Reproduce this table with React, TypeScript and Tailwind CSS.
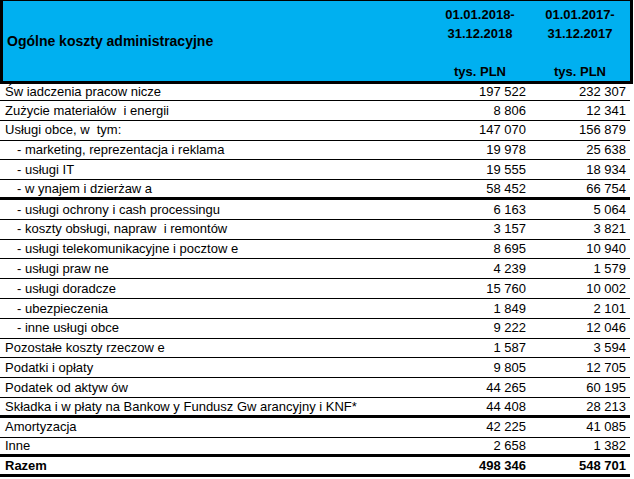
import React from 'react';

type Row = {
  label: string;
  a: string;
  b: string;
  sub?: boolean;
  thick?: boolean;
  bold?: boolean;
};

const rows: Row[] = [
  { label: 'Św iadczenia pracow nicze', a: '197 522', b: '232 307' },
  { label: 'Zużycie materiałów  i energii', a: '8 806', b: '12 341' },
  { label: 'Usługi obce, w  tym:', a: '147 070', b: '156 879' },
  { label: '- marketing, reprezentacja i reklama', a: '19 978', b: '25 638', sub: true },
  { label: '- usługi IT', a: '19 555', b: '18 934', sub: true },
  { label: '- w ynajem i dzierżaw a', a: '58 452', b: '66 754', sub: true, thick: true },
  { label: '- usługi ochrony i cash processingu', a: '6 163', b: '5 064', sub: true },
  { label: '- koszty obsługi, napraw  i remontów', a: '3 157', b: '3 821', sub: true },
  { label: '- usługi telekomunikacyjne i pocztow e', a: '8 695', b: '10 940', sub: true },
  { label: '- usługi praw ne', a: '4 239', b: '1 579', sub: true },
  { label: '- usługi doradcze', a: '15 760', b: '10 002', sub: true },
  { label: '- ubezpieczenia', a: '1 849', b: '2 101', sub: true },
  { label: '- inne usługi obce', a: '9 222', b: '12 046', sub: true },
  { label: 'Pozostałe koszty rzeczow e', a: '1 587', b: '3 594' },
  { label: 'Podatki i opłaty', a: '9 805', b: '12 705' },
  { label: 'Podatek od aktyw ów', a: '44 265', b: '60 195' },
  { label: 'Składka i w płaty na Bankow y Fundusz Gw arancyjny i KNF*', a: '44 408', b: '28 213', thick: true },
  { label: 'Amortyzacja', a: '42 225', b: '41 085' },
  { label: 'Inne', a: '2 658', b: '1 382', thick: true },
  { label: 'Razem', a: '498 346', b: '548 701', thick: true, bold: true },
];

export default function App() {
  return (
    <div className="w-[634px] h-[479px] bg-white text-black text-[13px] font-['Liberation_Sans',Arial,sans-serif] overflow-hidden">
      {/* Header */}
      <div className="w-[633px] h-[84px] flex bg-[#00b0f0] border-black border-t border-l-[3px] border-r-[3px] border-b-[3px] font-bold">
        <div className="flex-1 flex items-center pl-[4px] text-[14px]">Ogólne koszty administracyjne</div>
        <div className="w-[100px] flex flex-col items-center pt-[3.5px] leading-[19px]">
          <div>01.01.2018-</div>
          <div>31.12.2018</div>
          <div className="mt-auto">tys. PLN</div>
        </div>
        <div className="w-[100px] flex flex-col items-center pt-[3.5px] leading-[19px]">
          <div>01.01.2017-</div>
          <div>31.12.2017</div>
          <div className="mt-auto">tys. PLN</div>
        </div>
      </div>

      {/* Rows */}
      <div className="w-[630px]">
        {rows.map((r, i) => (
          <div
            key={i}
            className={`flex items-center border-black ${i === 0 ? 'h-[17px]' : 'h-[19.8px]'} ${
              r.thick ? 'border-b-[3px]' : 'border-b'
            } ${r.bold ? 'font-bold' : ''}`}
          >
            <div className={`w-[430px] whitespace-pre ${r.sub ? 'pl-[17px]' : 'pl-[5px]'}`}>
              {r.label}
            </div>
            <div className="w-[100px] text-right pr-[4px]">{r.a}</div>
            <div className="w-[100px] text-right pr-[4px]">{r.b}</div>
          </div>
        ))}
      </div>
    </div>
  );
}
